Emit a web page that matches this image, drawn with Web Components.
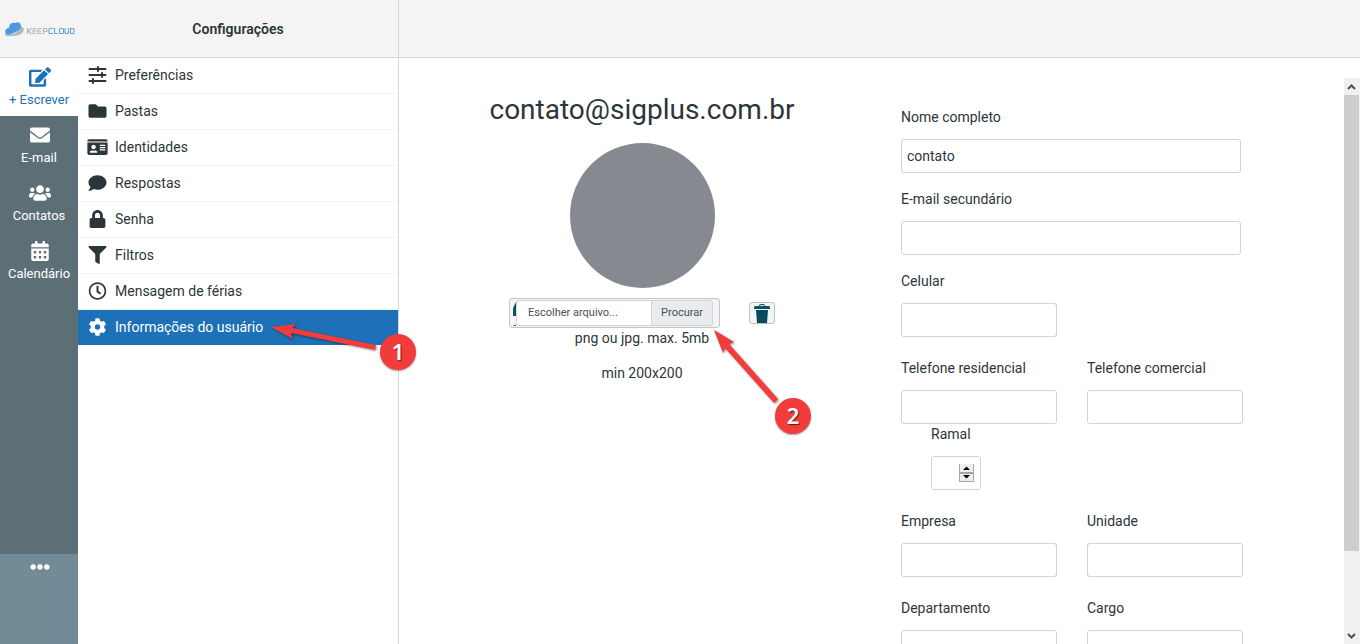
<!DOCTYPE html>
<html lang="pt-BR">
<head>
<meta charset="utf-8">
<title>Configurações</title>
<style>
html,body{margin:0;height:100%;overflow:hidden}
body{font:14px/21px Roboto,"Liberation Sans",sans-serif;color:#2c363a;background:#fff}
</style>
</head>
<body>
<settings-app></settings-app>
<script>
const define = (name, html, setup) => customElements.define(name, class extends HTMLElement {
  constructor() {
    super();
    const t = document.createElement('template');
    t.innerHTML = '<style>*{box-sizing:border-box}</style>' + html;
    this.attachShadow({mode: 'open'}).append(t.content.cloneNode(true));
  }
  connectedCallback() { if (setup && !this.ready) { this.ready = true; setup(this, this.shadowRoot); } }
});

/* icon name: [viewBox, path] */
const icons = {
  edit: ['0 0 576 512', 'M402.6 83.2l90.2 90.2c3.8 3.8 3.8 10 0 13.8L274.4 405.6l-92.8 10.3c-12.4 1.4-22.9-9.1-21.5-21.5l10.3-92.8L388.8 83.2c3.8-3.8 10-3.8 13.8 0zm162-22.9l-48.8-48.8c-15.2-15.2-39.9-15.2-55.2 0l-35.4 35.4c-3.8 3.8-3.8 10 0 13.8l90.2 90.2c3.8 3.8 10 3.8 13.8 0l35.4-35.4c15.2-15.3 15.2-40 0-55.2zM384 346.2V448H64V128h229.8c3.2 0 6.2-1.3 8.5-3.5l40-40c7.6-7.6 2.2-20.5-8.5-20.5H48C21.5 64 0 85.5 0 112v352c0 26.5 21.5 48 48 48h352c26.5 0 48-21.5 48-48V306.2c0-10.7-12.9-16-20.5-8.5l-40 40c-2.2 2.3-3.5 5.3-3.5 8.500z'],
  mail: ['0 0 512 512', 'M502.300 190.800c3.900-3.100 9.700-.2 9.700 4.700V400c0 26.500-21.500 48-48 48H48c-26.500 0-48-21.500-48-48V195.600c0-5 5.700-7.800 9.700-4.700 22.400 17.400 52.100 39.500 154.100 113.600 21.100 15.400 56.700 47.800 92.200 47.600 35.700.3 72-32.800 92.300-47.600 102-74.100 131.600-96.300 154-113.700zM256 320c23.200.4 56.600-29.200 73.400-41.400 132.700-96.300 142.800-104.700 173.400-128.700 5.800-4.500 9.200-11.500 9.200-18.900v-19c0-26.500-21.500-48-48-48H48c-26.500 0-48 21.500-48 48v19c0 7.400 3.400 14.300 9.200 18.900 30.600 23.900 40.700 32.400 173.400 128.700 16.800 12.200 50.200 41.800 73.400 41.400z'],
  users: ['0 0 640 512', 'M96 224c35.300 0 64-28.700 64-64s-28.700-64-64-64-64 28.700-64 64 28.700 64 64 64zm448 0c35.300 0 64-28.700 64-64s-28.700-64-64-64-64 28.700-64 64 28.700 64 64 64zm32 32h-64c-17.600 0-33.500 7.100-45.100 18.600 40.300 22.100 68.900 62 75.100 109.400h66c17.700 0 32-14.300 32-32v-32c0-35.300-28.700-64-64-64zm-256 0c61.900 0 112-50.100 112-112S381.900 32 320 32 208 82.100 208 144s50.100 112 112 112zm76.800 32h-8.300c-20.800 10-43.900 16-68.500 16s-47.600-6-68.500-16h-8.300C179.600 288 128 339.600 128 403.200V432c0 26.500 21.500 48 48 48h288c26.500 0 48-21.500 48-48v-28.800c0-63.600-51.600-115.200-115.200-115.200zm-223.700-13.400C161.500 263.100 145.600 256 128 256H64c-35.300 0-64 28.700-64 64v32c0 17.700 14.300 32 32 32h65.900c6.300-47.400 34.900-87.300 75.200-109.400z'],
  calendar: ['0 0 448 512', 'M0 464c0 26.500 21.500 48 48 48h352c26.500 0 48-21.500 48-48V192H0v272zm320-196c0-6.600 5.400-12 12-12h40c6.600 0 12 5.400 12 12v40c0 6.600-5.400 12-12 12h-40c-6.600 0-12-5.400-12-12v-40zm0 128c0-6.600 5.400-12 12-12h40c6.600 0 12 5.400 12 12v40c0 6.600-5.400 12-12 12h-40c-6.600 0-12-5.400-12-12v-40zM192 268c0-6.600 5.400-12 12-12h40c6.600 0 12 5.400 12 12v40c0 6.600-5.400 12-12 12h-40c-6.600 0-12-5.400-12-12v-40zm0 128c0-6.600 5.400-12 12-12h40c6.600 0 12 5.400 12 12v40c0 6.600-5.400 12-12 12h-40c-6.600 0-12-5.400-12-12v-40zM64 268c0-6.600 5.400-12 12-12h40c6.600 0 12 5.400 12 12v40c0 6.600-5.400 12-12 12H76c-6.600 0-12-5.400-12-12v-40zm0 128c0-6.600 5.400-12 12-12h40c6.600 0 12 5.400 12 12v40c0 6.600-5.400 12-12 12H76c-6.600 0-12-5.400-12-12v-40zM400 64h-48V16c0-8.800-7.200-16-16-16h-32c-8.800 0-16 7.200-16 16v48H160V16c0-8.800-7.200-16-16-16h-32c-8.800 0-16 7.200-16 16v48H48C21.500 64 0 85.500 0 112v48h448v-48c0-26.500-21.500-48-48-48z'],
  dots: ['0 0 512 512', 'M328 256c0 39.800-32.200 72-72 72s-72-32.200-72-72 32.200-72 72-72 72 32.200 72 72zm104-72c-39.800 0-72 32.200-72 72s32.200 72 72 72 72-32.200 72-72-32.200-72-72-72zm-352 0c-39.800 0-72 32.200-72 72s32.200 72 72 72 72-32.200 72-72-32.200-72-72-72z'],
  sliders: ['0 0 18 18', 'M1 2h7.500V1q0-1 1-1t1 1v1H17q1 0 1 1t-1 1h-6.500v1q0 1-1 1t-1-1V4H1Q0 4 0 3t1-1zM1 8h11.500V7q0-1 1-1t1 1v1H17q1 0 1 1t-1 1h-2.500v1q0 1-1 1t-1-1v-1H1Q0 10 0 9t1-1zM1 14h2.500v-1q0-1 1-1t1 1v1H17q1 0 1 1t-1 1H5.500v1q0 1-1 1t-1-1v-1H1Q0 16 0 15t1-1z'],
  folder: ['0 0 512 512', 'M464 128H272l-64-64H48C21.500 64 0 85.500 0 112v288c0 26.500 21.500 48 48 48h416c26.500 0 48-21.500 48-48V176c0-26.500-21.500-48-48-48z'],
  idcard: ['0 0 576 512', 'M528 32H48C21.500 32 0 53.500 0 80v16h576V80c0-26.500-21.500-48-48-48zM0 432c0 26.500 21.500 48 48 48h480c26.500 0 48-21.500 48-48V128H0v304zm352-232c0-4.400 3.600-8 8-8h144c4.400 0 8 3.600 8 8v16c0 4.400-3.600 8-8 8H360c-4.400 0-8-3.600-8-8v-16zm0 64c0-4.400 3.600-8 8-8h144c4.400 0 8 3.600 8 8v16c0 4.400-3.600 8-8 8H360c-4.400 0-8-3.600-8-8v-16zm0 64c0-4.400 3.600-8 8-8h144c4.400 0 8 3.600 8 8v16c0 4.400-3.600 8-8 8H360c-4.400 0-8-3.600-8-8v-16zM176 192c35.300 0 64 28.700 64 64s-28.700 64-64 64-64-28.700-64-64 28.700-64 64-64zM67.100 396.200C75.500 370.500 99.600 352 128 352h8.200c12.300 5.100 25.700 8 39.800 8s27.600-2.900 39.800-8h8.200c28.400 0 52.500 18.500 60.900 44.200 3.200 9.900-5.200 19.800-15.600 19.800H82.700c-10.400 0-18.800-10-15.600-19.800z'],
  comment: ['0 0 512 512', 'M256 32C114.600 32 0 125.100 0 240c0 49.600 21.400 95 57 130.700C44.500 421.100 2.700 466 2.200 466.500c-2.200 2.300-2.800 5.700-1.500 8.700S4.800 480 8 480c66.300 0 116-31.800 140.600-51.400 32.700 12.300 69 19.400 107.400 19.400 141.400 0 256-93.100 256-208S397.400 32 256 32z'],
  lock: ['0 0 448 512', 'M400 224h-24v-72C376 68.200 307.800 0 224 0S72 68.200 72 152v72H48c-26.500 0-48 21.500-48 48v192c0 26.500 21.500 48 48 48h352c26.500 0 48-21.500 48-48V272c0-26.500-21.500-48-48-48zm-104 0H152v-72c0-39.700 32.300-72 72-72s72 32.300 72 72v72z'],
  filter: ['0 0 512 512', 'M487.976 0H24.028C2.710 0-8.047 25.866 7.058 40.971L192 225.941V432c0 7.831 3.821 15.170 10.237 19.662l80 55.980C298.020 518.690 320 507.493 320 487.980V225.941l184.947-184.970C520.021 25.896 509.338 0 487.976 0z'],
  clock: ['0 0 512 512', 'M256 8C119 8 8 119 8 256s111 248 248 248 248-111 248-248S393 8 256 8zm0 448c-110.500 0-200-89.500-200-200S145.500 56 256 56s200 89.500 200 200-89.500 200-200 200zm61.800-104.400l-84.900-61.700c-3.100-2.300-4.900-5.900-4.900-9.700V116c0-6.600 5.400-12 12-12h32c6.600 0 12 5.400 12 12v141.700l66.800 48.600c5.400 3.900 6.500 11.400 2.600 16.800L334.600 349c-3.900 5.300-11.400 6.500-16.800 2.600z'],
  cog: ['0 0 512 512', 'M487.400 315.700l-42.600-24.600c4.300-23.200 4.300-47 0-70.200l42.600-24.600c4.900-2.800 7.100-8.600 5.500-14-11.100-35.600-30-67.800-54.700-94.600-3.800-4.100-10-5.100-14.800-2.300L380.800 110c-17.900-15.400-38.500-27.300-60.800-35.100V25.800c0-5.600-3.900-10.500-9.400-11.700-36.700-8.200-74.300-7.800-109.200 0-5.500 1.200-9.400 6.100-9.400 11.700V75c-22.200 7.900-42.800 19.800-60.800 35.100L88.700 85.500c-4.900-2.800-11-1.900-14.800 2.300-24.700 26.700-43.600 58.900-54.700 94.600-1.700 5.400.6 11.200 5.500 14L67.300 221c-4.300 23.200-4.300 47 0 70.200l-42.600 24.600c-4.900 2.800-7.100 8.600-5.500 14 11.100 35.600 30 67.800 54.700 94.600 3.800 4.100 10 5.100 14.800 2.300l42.600-24.600c17.900 15.400 38.500 27.300 60.800 35.100v49.200c0 5.600 3.900 10.500 9.400 11.700 36.700 8.200 74.300 7.800 109.200 0 5.500-1.200 9.400-6.100 9.400-11.700v-49.200c22.200-7.900 42.800-19.800 60.800-35.100l42.600 24.600c4.900 2.800 11 1.900 14.800-2.300 24.700-26.700 43.600-58.900 54.700-94.600 1.500-5.500-.7-11.300-5.600-14.100zM256 336c-44.100 0-80-35.900-80-80s35.900-80 80-80 80 35.900 80 80-35.900 80-80 80z']
};

const addIcon = (el, host) => {
  const icon = document.createElement('ui-icon');
  icon.setAttribute('name', el.getAttribute('icon'));
  host.prepend(icon);
};

define('ui-icon', `<style>:host{display:block;flex:none}svg{display:block;width:100%;height:100%;fill:currentColor}</style><svg aria-hidden="true"><path/></svg>`,
  (el, root) => {
    const [box, d] = icons[el.getAttribute('name')];
    root.querySelector('svg').setAttribute('viewBox', box);
    root.querySelector('path').setAttribute('d', d);
  });

define('brand-logo', `<style>:host{display:block}svg{display:block;width:70px;height:17px}</style>
<svg viewBox="0 0 70 17" role="img" aria-label="KeepCloud">
<path d="M14 5c4 0 6 3 4 6s-6 4-11 4l-5-1c6 0 13-3 12-9z" fill="#b4b6b8"/>
<path d="M0 13c-1 3 7 3 13 0l4-3c-4 3-13 5-17 3z" fill="#bcbec0"/>
<path d="M1 13c-2-3 0-6 3-6 0-5 4-6 6-5 3-2 6 0 6 3 0 4-4 5-7 7-3 1-6 3-8 1z" fill="#4f9ade"/>
<g fill="none" stroke="#b3b5b7" stroke-width="1.100"><path d="M22.500 7v6M26.500 7l-3.500 3 3.500 3M31.500 7.500H29q-1 0-1 1v3q0 1 1 1h2.500M28 10h3.500M36.500 7.500H34q-1 0-1 1v3q0 1 1 1h2.500M33 10h3.500M38.500 13V7.500h2.500q1 0 1 1v1q0 1-1 1h-2.500"/></g>
<g fill="none" stroke="#64a3e2" stroke-width="1.100"><path d="M48 7.500h-3q-1 0-1 1v3q0 1 1 1h3M49.500 7v4.500q0 1 1 1H53M55.500 7.500h2q1 0 1 1v3q0 1-1 1h-2q-1 0-1-1v-3q0-1 1-1M60 7v4.500q0 1 1 1h1.500q1 0 1-1V7M65.500 7.500h2.500q1 0 1 1v3q0 1-1 1h-2.500z"/></g></svg>`);

define('task-button', `<style>:host{display:block;height:58px;color:#fff}
button{all:unset;box-sizing:border-box;cursor:pointer;width:100%;height:100%;display:flex;flex-direction:column;align-items:center;gap:3px;padding-top:9px;font-size:13px;line-height:20px;white-space:nowrap}
ui-icon{width:23px;height:20px;padding-left:1px;box-sizing:border-box}
:host([accent]){background:#fff;color:#1d71b8}
:host([more]){height:90px;background:#738b96}:host([more]) button{padding-top:3px}</style>
<button type="button"><slot></slot></button>`,
  (el, root) => {
    addIcon(el, root.querySelector('button'));
    if (el.hasAttribute('more')) root.querySelector('button').setAttribute('aria-label', 'Mais');
  });

define('task-menu', `<style>:host{display:flex;flex-direction:column;width:78px;flex:none;background:#5c6f77}
div{flex:1}</style>
<task-button accent icon="edit">+ Escrever</task-button>
<task-button icon="mail">E-mail</task-button>
<task-button icon="users">Contatos</task-button>
<task-button icon="calendar">Calendário</task-button>
<div></div>
<task-button more icon="dots"></task-button>`);

define('settings-item', `<style>:host{display:block;position:relative;border-bottom:1px solid #f1f3f4}
a{display:flex;align-items:center;gap:7px;height:35px;padding-left:9px;color:inherit;text-decoration:none}
ui-icon{width:21px;height:18px;margin-bottom:1px}
:host([active]){border-color:transparent}:host([active]) a{background:#1d71b8;color:#fff}</style>
<a href="#"><slot></slot></a><slot name="note"></slot>`,
  (el, root) => {
    addIcon(el, root.querySelector('a'));
    if (el.hasAttribute('active')) root.querySelector('a').setAttribute('aria-current', 'page');
  });

/* numbered pin with an arrow, laid over the interface */
define('step-note', `<style>:host{display:block;position:absolute;z-index:2;pointer-events:none}
svg{display:block;overflow:visible;filter:drop-shadow(1px 1px 1px #0007)}
span{position:absolute;right:0;bottom:0;width:36px;height:36px;border-radius:50%;background:#f23c3c;color:#fff;display:grid;place-items:center;font:600 22px/34px "Noto Sans",sans-serif;padding-bottom:2px;text-shadow:1px 1px 1px #0009;box-shadow:0 1px 2px #0006}</style>
<svg><path fill="#f23c3c"/></svg><span><slot></slot></span>`,
  (el, root) => {
    const svg = root.querySelector('svg');
    svg.setAttribute('width', el.getAttribute('w'));
    svg.setAttribute('height', el.getAttribute('h'));
    svg.firstElementChild.setAttribute('d', el.getAttribute('path'));
  });

define('settings-menu', `<style>:host{display:block;width:321px;flex:none;border-right:1px solid #d0d8dc}
settings-item step-note{left:193px;top:17px}</style>
<nav>
<settings-item icon="sliders">Preferências</settings-item>
<settings-item icon="folder">Pastas</settings-item>
<settings-item icon="idcard">Identidades</settings-item>
<settings-item icon="comment">Respostas</settings-item>
<settings-item icon="lock">Senha</settings-item>
<settings-item icon="filter">Filtros</settings-item>
<settings-item icon="clock">Mensagem de férias</settings-item>
<settings-item icon="cog" active>Informações do usuário<step-note slot="note" w="145" h="43" path="M0 0L25-3 21 1 105 18 104 23 20 6 22 12z">1</step-note></settings-item>
</nav>`);

define('top-bar', `<style>:host{display:flex;height:58px;flex:none;background:#f4f4f4;border-bottom:1px solid #d0d8dc}
brand-logo{width:78px;padding:21px 0 0 5px}
h1{margin:0;width:321px;border-right:1px solid #d0d8dc;font-size:14px;font-weight:600;line-height:58px;text-align:center}</style>
<brand-logo></brand-logo><h1>Configurações</h1>`);

define('photo-upload', `<style>:host{display:flex;position:relative;align-items:center;justify-content:center;gap:29px;height:30px}
label{position:relative;display:flex;width:211px;height:30px;padding:1px 6px 1px 3px;border:1px solid #c3c5c7;border-radius:3px;background:#f4f4f4;font-size:11px;color:#495057;cursor:pointer}
label svg{width:3px;height:26px;flex:none}
label input{position:absolute;width:1px;height:1px;opacity:0}
.name,.pick{height:26px;line-height:23px;border:1px solid #ced4da;background:#fff}
.name{flex:1;padding-left:11px;text-align:left;border-radius:3px 0 0 3px;border-right:0}
.pick{padding:0 9px;background:#e9ecef;border-radius:0 3px 3px 0}
button{width:26px;height:22px;padding:0;display:grid;place-items:center;border:1px solid #bfc1c3;border-radius:3px;background:#f4f4f4}
button svg{width:16px;height:20px}
step-note{left:50%;top:33px;margin-left:72px}</style>
<label><svg viewBox="0 0 3 26" aria-hidden="true"><path d="M3 2v14H0V8zM0 26q0-1 3-1v1z" fill="#0b5468"/></svg>
<input type="file" accept="image/png,image/jpeg"><span class="name">Escolher arquivo...</span><span class="pick">Procurar</span></label>
<button type="button" aria-label="Remover foto"><svg viewBox="0 0 16 20"><path d="M5 3q0-2 2-2h2q2 0 2 2h4q1 0 1 2v1H0V5q0-2 1-2zM6 3h4q0-1-1-1H7q-1 0-1 1z" fill="#0d5060" fill-rule="evenodd"/><path d="M2 7h12l-1 13H3z" fill="#064b5e"/></svg></button>
<step-note w="97" h="103" path="M0-1L20 11 15 13 64 68 60 72 11 17 9 22z">2</step-note>`);

define('user-card', `<style>:host{display:block;text-align:center;padding-top:11px}
h2{margin:0;font-size:28px;font-weight:400;line-height:42px}
.photo{width:145px;height:145px;margin:12px auto 10px;border-radius:50%;background:#868a90}
p{margin:0 0 14px}</style>
<h2>contato@sigplus.com.br</h2>
<div class="photo" role="img" aria-label="Foto"></div>
<photo-upload></photo-upload>
<p>png ou jpg. max. 5mb</p><p>min 200x200</p>`);

define('form-field', `<style>:host{display:block}
label{display:block;margin-bottom:11px}
.box{display:flex;align-items:center;height:34px;border:1px solid #ced4da;border-radius:3px;background:#fff}
input{width:100%;min-width:0;height:100%;border:0;background:none;outline:0;padding:0 5px;font:inherit;color:inherit;appearance:textfield}
input::-webkit-inner-spin-button{display:none}
svg{display:none}
:host([type=number]) svg{display:block;flex:none;width:15px;height:18px;margin-right:6px}</style>
<label for="f"><slot></slot></label>
<div class="box"><input id="f"><svg viewBox="0 0 15 18" aria-hidden="true"><path d="M0 0h15v18H0z" fill="#a5a5a5"/><path d="M1 0h13v8H1zM1 10h13v7H1z" fill="#eee"/><path d="M4 6h7L7.500 2.500zM4 11h7l-3.500 3.500z" fill="#000"/></svg></div>`,
  (el, root) => {
    const input = root.querySelector('input');
    input.type = el.getAttribute('type') || 'text';
    input.value = el.getAttribute('value') || '';
    input.setAttribute('aria-label', el.textContent);
  });

define('user-form', `<style>:host{display:block;padding:29px 16px 0}
form{display:grid;grid-template-columns:1fr 1fr;column-gap:30px;max-width:342px}
form-field{margin-bottom:21px}
.full{grid-column:1/3;margin:0 2px 16px 0}
.tight{margin-bottom:0}
.ext{grid-column:1/3;width:50px;margin-left:30px}</style>
<form>
<form-field class="full" value="contato">Nome completo</form-field>
<form-field class="full">E-mail secundário</form-field>
<form-field>Celular</form-field><span></span>
<form-field class="tight">Telefone residencial</form-field>
<form-field class="tight">Telefone comercial</form-field>
<form-field class="ext" type="number">Ramal</form-field>
<form-field>Empresa</form-field>
<form-field>Unidade</form-field>
<form-field>Departamento</form-field>
<form-field>Cargo</form-field>
</form>`);

define('scroll-rail', `<style>:host{display:flex;flex-direction:column;width:16px;flex:none;background:#f0f0f0}
svg{width:16px;height:17px;flex:none;fill:none;stroke:#505050;stroke-width:2}
div{flex:456;margin-right:1px;background:#cdcdcd}i{flex:76}</style>
<svg viewBox="0 0 16 17"><path d="M4 11l3.500-3.500L11 11"/></svg><div></div><i></i><svg viewBox="0 0 16 17"><path d="M4 7l3.500 3.500L11 7"/></svg>`);

define('settings-app', `<style>:host{display:flex;flex-direction:column;height:100vh;overflow:hidden}
.body{flex:1;min-height:0;display:flex}
main{flex:1;min-width:0;display:flex;padding-top:20px}
.cols{flex:1;min-width:0;overflow:hidden;display:grid;grid-template-columns:18fr 17fr}</style>
<top-bar></top-bar>
<div class="body"><task-menu></task-menu><settings-menu></settings-menu>
<main><div class="cols"><user-card></user-card><user-form></user-form></div><scroll-rail></scroll-rail></main></div>`);
</script>
</body>
</html>
